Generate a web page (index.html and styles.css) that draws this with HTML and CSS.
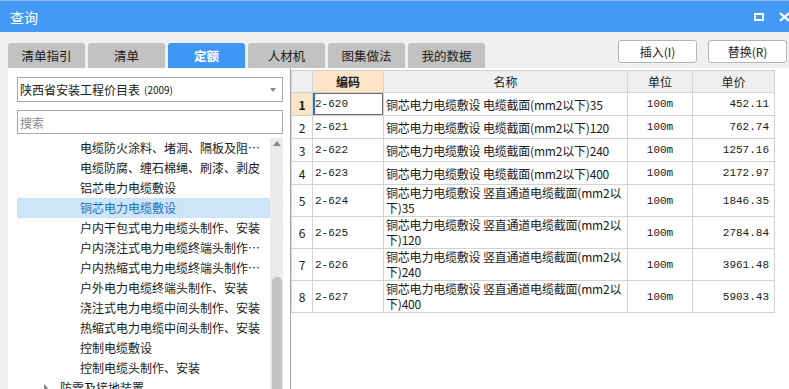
FILE: index.html
```html
<!DOCTYPE html>
<html lang="zh-CN">
<head>
    <meta charset="UTF-8">
    <title>查询</title>
    <link rel="stylesheet" href="styles.css">
</head>
<body>
    <div class="titlebar">
        <span class="title">查询</span>
        <div class="win-btns">
            <svg width="10" height="8" viewBox="0 0 10 8"><rect x="1" y="1" width="8" height="6" fill="none" stroke="#fff" stroke-width="2"/></svg>
            <svg width="11" height="10" viewBox="0 0 11 10"><path d="M1 1 L10 9 M10 1 L1 9" stroke="#fff" stroke-width="2.2"/></svg>
        </div>
    </div>

    <div class="toolbar">
        <div class="tabs">
            <div class="tab">清单指引</div>
            <div class="tab">清单</div>
            <div class="tab active">定额</div>
            <div class="tab">人材机</div>
            <div class="tab">图集做法</div>
            <div class="tab">我的数据</div>
        </div>
        <div class="actions">
            <button>插入(I)</button>
            <button>替换(R)</button>
        </div>
    </div>

    <div class="main">
        <!-- left: catalogue tree -->
        <div class="side">
            <div class="select">陕西省安装工程价目表 <small>(2009)</small><span class="caret"></span></div>
            <input class="search" type="text" placeholder="搜索">
            <div class="tree-wrap">
                <ul class="tree">
                    <li><span>电缆防火涂料、堵洞、隔板及阻燃墙</span></li>
                    <li><span>电缆防腐、缠石棉绳、刷漆、剥皮</span></li>
                    <li><span>铝芯电力电缆敷设</span></li>
                    <li class="on"><span>铜芯电力电缆敷设</span></li>
                    <li><span>户内干包式电力电缆头制作、安装</span></li>
                    <li><span>户内浇注式电力电缆终端头制作、安装</span></li>
                    <li><span>户内热缩式电力电缆终端头制作、安装</span></li>
                    <li><span>户外电力电缆终端头制作、安装</span></li>
                    <li><span>浇注式电力电缆中间头制作、安装</span></li>
                    <li><span>热缩式电力电缆中间头制作、安装</span></li>
                    <li><span>控制电缆敷设</span></li>
                    <li><span>控制电缆头制作、安装</span></li>
                    <li class="group"><i class="arrow"></i><span>防雷及接地装置</span></li>
                </ul>
                <div class="scrollbar">
                    <span class="up"></span>
                    <span class="thumb"></span>
                </div>
            </div>
        </div>

        <!-- right: quota grid -->
        <div class="grid">
            <table>
                <colgroup>
                    <col style="width: 21px">
                    <col style="width: 71px">
                    <col style="width: 244px">
                    <col style="width: 65px">
                    <col style="width: 82px">
                </colgroup>
                <tr>
                    <th></th>
                    <th class="code">编码</th>
                    <th>名称</th>
                    <th>单位</th>
                    <th>单价</th>
                </tr>
                <tr class="cur">
                    <td class="idx">1</td>
                    <td class="code">2-620</td>
                    <td class="name">铜芯电力电缆敷设 电缆截面(mm2以下)35</td>
                    <td class="unit">100m</td>
                    <td class="price">452.11</td>
                </tr>
                <tr>
                    <td class="idx">2</td>
                    <td class="code">2-621</td>
                    <td class="name">铜芯电力电缆敷设 电缆截面(mm2以下)120</td>
                    <td class="unit">100m</td>
                    <td class="price">762.74</td>
                </tr>
                <tr>
                    <td class="idx">3</td>
                    <td class="code">2-622</td>
                    <td class="name">铜芯电力电缆敷设 电缆截面(mm2以下)240</td>
                    <td class="unit">100m</td>
                    <td class="price">1257.16</td>
                </tr>
                <tr>
                    <td class="idx">4</td>
                    <td class="code">2-623</td>
                    <td class="name">铜芯电力电缆敷设 电缆截面(mm2以下)400</td>
                    <td class="unit">100m</td>
                    <td class="price">2172.97</td>
                </tr>
                <tr class="two">
                    <td class="idx">5</td>
                    <td class="code">2-624</td>
                    <td class="name">铜芯电力电缆敷设 竖直通道电缆截面(mm2以<br>下)35</td>
                    <td class="unit">100m</td>
                    <td class="price">1846.35</td>
                </tr>
                <tr class="two">
                    <td class="idx">6</td>
                    <td class="code">2-625</td>
                    <td class="name">铜芯电力电缆敷设 竖直通道电缆截面(mm2以<br>下)120</td>
                    <td class="unit">100m</td>
                    <td class="price">2784.84</td>
                </tr>
                <tr class="two">
                    <td class="idx">7</td>
                    <td class="code">2-626</td>
                    <td class="name">铜芯电力电缆敷设 竖直通道电缆截面(mm2以<br>下)240</td>
                    <td class="unit">100m</td>
                    <td class="price">3961.48</td>
                </tr>
                <tr class="two">
                    <td class="idx">8</td>
                    <td class="code">2-627</td>
                    <td class="name">铜芯电力电缆敷设 竖直通道电缆截面(mm2以<br>下)400</td>
                    <td class="unit">100m</td>
                    <td class="price">5903.43</td>
                </tr>
            </table>
        </div>
    </div>
</body>
</html>
```

FILE: styles.css
```css
body {
    margin: 0;
    width: 789px;
    height: 389px;
    overflow: hidden;
    background-color: #f0f0f0;
    font-family: "Noto Sans CJK SC", "Liberation Sans", sans-serif;
    font-size: 12px;
    color: #1a1a1a;
}

/* Title bar */
.titlebar {
    height: 31px;
    border-top: 1px solid #8db7e6;
    background-color: #4499f6;
    display: flex;
    align-items: center;
    padding-left: 10px;
    color: #fff;
}

.title {
    font-size: 14px;
}

.win-btns {
    margin-left: auto;
    margin-right: -1px;
    display: flex;
    align-items: center;
    gap: 15px;
}

/* Tabs + buttons */
.toolbar {
    height: 36px;
    display: flex;
    align-items: flex-start;
    padding-left: 8px;
}

.tabs {
    display: flex;
    gap: 3px;
    margin-top: 11px;
}

.tab {
    width: 77px;
    height: 25px;
    line-height: 25px;
    text-align: center;
    background-color: #c2c2c2;
    border-radius: 3px 3px 0 0;
    font-size: 12.5px;
    color: #1a1a1a;
}

.tab.active {
    background-color: #3f97f5;
    color: #fff;
    font-weight: bold;
}

.actions {
    margin-left: auto;
    margin-right: 2px;
    margin-top: 8px;
    display: flex;
    gap: 11px;
}

.actions button {
    width: 79px;
    height: 23px;
    padding: 0;
    background: #fff;
    border: 1px solid #b4b4b4;
    border-radius: 3px;
    font-family: inherit;
    font-size: 12px;
    color: #222;
}

/* Main area */
.main {
    display: flex;
    height: 321px;
}

.side {
    width: 282px;
    margin-left: 8px;
    padding: 9px 7px 0 9px;
    box-sizing: border-box;
    background: #fff;
    display: flex;
    flex-direction: column;
}

.select {
    height: 25px;
    box-sizing: border-box;
    border: 1px solid #a8a8a8;
    padding-left: 2px;
    display: flex;
    align-items: center;
    white-space: nowrap;
}

.select small {
    font-size: 10px;
    margin-left: 4px;
}

.caret {
    margin-left: auto;
    margin-right: 6px;
    border-top: 4px solid #8a8a8a;
    border-left: 3px solid transparent;
    border-right: 3px solid transparent;
}

.search {
    margin: 8px 0 0;
    height: 24px;
    box-sizing: border-box;
    border: 1px solid #a8a8a8;
    padding: 0 2px;
    font-family: inherit;
    font-size: 12px;
    outline: none;
}

.search::placeholder {
    color: #8a8a8a;
}

.tree-wrap {
    margin-top: 4px;
    flex: 1;
    min-height: 0;
    display: flex;
    overflow: hidden;
}

.tree {
    flex: 1;
    list-style: none;
    margin: 0;
    padding: 0;
}

.tree li {
    height: 20px;
    line-height: 20px;
    padding-left: 63px;
    display: flex;
    align-items: center;
}

.tree li span {
    display: block;
    width: 182px;
    overflow: hidden;
    white-space: nowrap;
    text-overflow: ellipsis;
}

.tree li.on {
    background-color: #cce5f8;
    color: #1c6fc4;
}

.tree li.group {
    padding-left: 27px;
}

.arrow {
    border-left: 4px solid #8a8a8a;
    border-top: 4px solid transparent;
    border-bottom: 4px solid transparent;
    margin-right: 12px;
}

.scrollbar {
    width: 13px;
    background-color: #ebebeb;
    display: flex;
    flex-direction: column;
    align-items: center;
}

.scrollbar .up {
    margin-top: 3px;
    border-bottom: 5px solid #8a8a8a;
    border-left: 4px solid transparent;
    border-right: 4px solid transparent;
}

.scrollbar .thumb {
    margin-top: auto;
    width: 10px;
    height: 112px;
    background-color: #c3c3c3;
    border-radius: 5px 5px 0 0;
}

/* Grid */
.grid {
    flex: 1;
    background: #fff;
    border-left: 1px solid #a6a6a6;
    padding-top: 2px;
}

.grid table {
    border-collapse: collapse;
    table-layout: fixed;
    width: 483px;
}

.grid th,
.grid td {
    border: 1px solid #d2d2d2;
    padding: 0 2px;
    white-space: nowrap;
    overflow: hidden;
}

.grid th {
    height: 21px;
    background-color: #efefef;
    font-weight: normal;
}

.grid th.code {
    background-color: #fde4c6;
    font-weight: bold;
}

.grid td {
    height: 22px;
}

.grid tr.two td {
    height: 31px;
}

.grid td.idx {
    text-align: center;
    padding: 0;
}

.grid tr.cur td.idx {
    background-color: #fde4c6;
    font-weight: bold;
}

.grid tr.cur td.code {
    box-shadow: inset 2px 0 0 #2b6cd4, inset 0 0 0 1px #6a6a6a;
}

.grid td.code,
.grid td.unit,
.grid td.price {
    font-family: "Liberation Mono", monospace;
    font-size: 11px;
}

.grid td.name {
    letter-spacing: -0.2px;
}

.grid tr.two td.name {
    vertical-align: top;
    line-height: 15px;
    padding-top: 0;
}

.grid td.unit {
    text-align: center;
}

.grid td.price {
    text-align: right;
    padding-right: 5px;
}
```
